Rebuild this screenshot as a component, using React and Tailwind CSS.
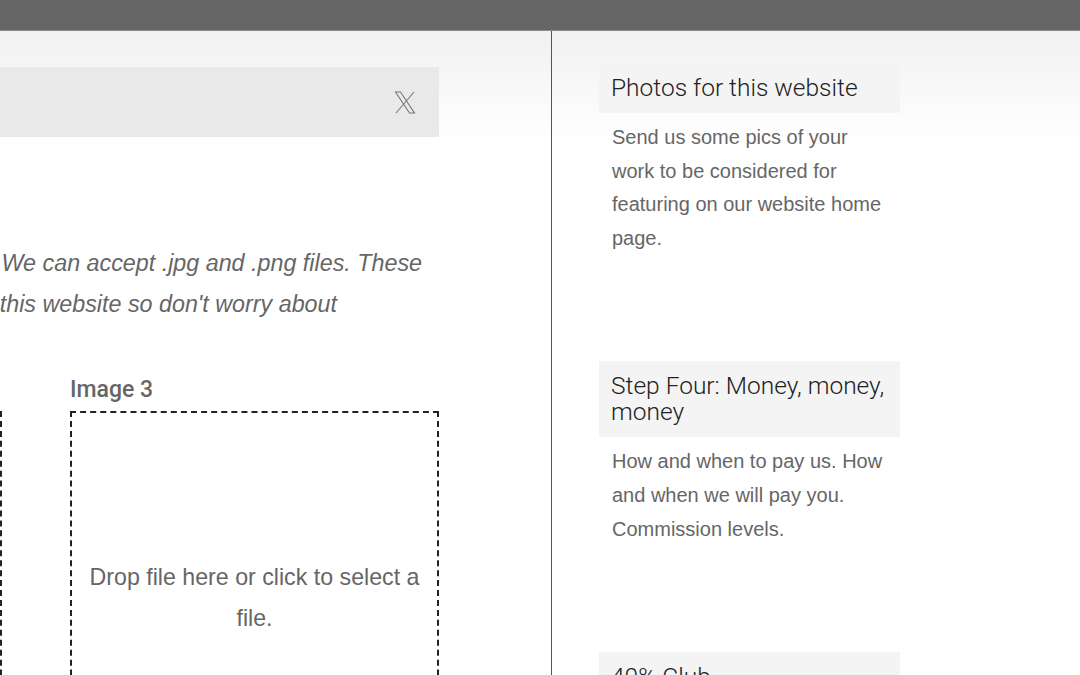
import React from 'react';

function XIcon() {
  return (
    <svg width="22" height="23" viewBox="0 0 22 23" fill="none" stroke="#777" strokeWidth="1.1">
      <polygon points="1.5,1 6.5,1 20.5,22 15.5,22" />
      <line x1="20" y1="1" x2="2" y2="22" />
    </svg>
  );
}

const cards = [
  {
    title: 'Photos for this website',
    body: 'Send us some pics of your work to be considered for featuring on our website home page.',
  },
  {
    title: 'Step Four: Money, money, money',
    body: 'How and when to pay us. How and when we will pay you. Commission levels.',
  },
  {
    title: '40% Club',
    body: 'Find out how to join the 40% club and what it means for you.',
  },
];

export default function App() {
  return (
    <div className="h-[675px] w-[1080px] overflow-hidden bg-white">
      <div className="h-[31px] bg-[#666666] border-b border-[#8a8a8a]" />
      <div className="flex h-[644px] bg-gradient-to-b from-[#f1f1f1] to-white to-[110px]">
        {/* left column, scrolled partly out of view */}
        <div className="w-[551px] shrink-0 overflow-hidden">
          <div className="ml-[-367px] w-[806px]">
            <div className="mt-[36px] h-[70px] bg-[#e9e9e9] flex items-center justify-end pr-[23px]">
              <XIcon />
            </div>
            <div
              className="mt-[106px] text-[#666] italic text-[23.3px] leading-[41px]"
              style={{ fontFamily: '"Liberation Sans", Arial, sans-serif' }}
            >
              <div className="flex justify-end pr-[17px] whitespace-nowrap">
                <span>Please upload up to three photos of your work here. We can accept .jpg and .png files. These</span>
              </div>
              <div className="flex justify-end pr-[102px] whitespace-nowrap">
                <span>will be resized automatically when they are added to this website so don't worry about</span>
              </div>
            </div>
            <div className="mt-[51px] grid grid-cols-2 gap-[68px]">
              {['Image 2', 'Image 3'].map((label) => (
                <div key={label}>
                  <div
                    className="text-[23px] leading-[28px] font-medium text-[#666] mb-[7px]"
                    style={{ fontFamily: 'Roboto, sans-serif' }}
                  >
                    {label}
                  </div>
                  <div
                    className="h-[374px] border-2 border-dashed border-[#222] flex items-center justify-center px-[14px] text-center text-[23.2px] leading-[41px] text-[#666]"
                    style={{ fontFamily: '"Liberation Sans", Arial, sans-serif' }}
                  >
                    Drop file here or click to select a file.
                  </div>
                </div>
              ))}
            </div>
          </div>
        </div>
        {/* right sidebar */}
        <div className="flex-1 border-l border-[#555] pl-[47px] pt-[32px]">
          {cards.map((c) => (
            <div key={c.title} className="w-[301px] mb-[106px]">
              <div
                className="bg-[#f4f4f4] px-[12px] py-[12px] text-[24.5px] leading-[26px] font-light text-[#222]"
                style={{ fontFamily: 'Roboto, sans-serif' }}
              >
                {c.title}
              </div>
              <div
                className="pl-[13px] pr-[6px] pt-[8px] text-[20px] leading-[33.6px] text-[#666]"
                style={{ fontFamily: '"Liberation Sans", Arial, sans-serif' }}
              >
                {c.body}
              </div>
            </div>
          ))}
        </div>
      </div>
    </div>
  );
}
